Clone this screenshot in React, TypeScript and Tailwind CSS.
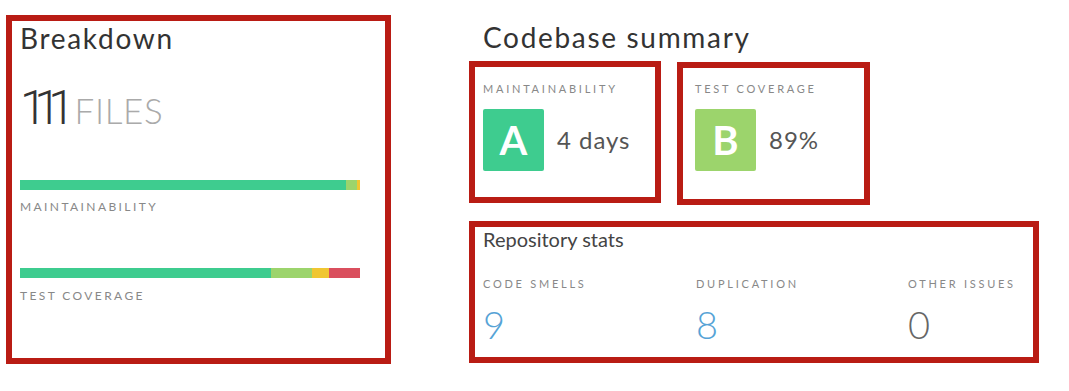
const font = { fontFamily: 'Lato, "Open Sans", sans-serif' };

function Bar({ parts }: { parts: { w: number; c: string }[] }) {
  return (
    <div className="flex h-[10px] w-[340px]">
      {parts.map((p, i) => (
        <div key={i} className={p.c} style={{ width: p.w }} />
      ))}
    </div>
  );
}

function Label({ children, className = '' }: { children: React.ReactNode; className?: string }) {
  return (
    <div className={`text-[11px] leading-[13px] tracking-[0.25em] text-[#888] uppercase ${className}`}>
      {children}
    </div>
  );
}

function Grade({ letter, color, value }: { letter: string; color: string; value: string }) {
  return (
    <div className="mt-[14px] flex items-center">
      <div className={`flex h-[62px] w-[61px] items-center justify-center rounded-[2px] ${color}`}>
        <span className="text-[40px] font-bold leading-none text-white">{letter}</span>
      </div>
      <span className="ml-[13px] text-[24px] tracking-[0.04em] text-[#555]">{value}</span>
    </div>
  );
}

export default function App() {
  return (
    <div className="flex h-[391px] w-[1069px] bg-white" style={font}>
      {/* Breakdown */}
      <div className="ml-[6px] mt-[15px] h-[349px] w-[385px] border-[6px] border-[#b91c14] pl-[8px]">
        <h2 className="text-[28px] leading-[34px] tracking-[0.06em] text-[#333]">Breakdown</h2>
        <div className="mt-[29px] flex h-[48px] items-baseline">
          <span className="font-['Roboto',sans-serif] text-[48px] leading-[48px] font-light tracking-[-0.26em] text-[#333]">
            111
          </span>
          <span className="ml-[12px] text-[35px] leading-[48px] font-light tracking-[0.02em] text-[#aaa]">FILES</span>
        </div>
        <div className="mt-[48px]">
          <Bar
            parts={[
              { w: 326, c: 'bg-[#3ecc8f]' },
              { w: 11, c: 'bg-[#9cd46c]' },
              { w: 3, c: 'bg-[#f0c632]' },
            ]}
          />
        </div>
        <div className="mt-[10px] text-[12px] leading-[14px] tracking-[0.2em] text-[#888]">MAINTAINABILITY</div>
        <div className="mt-[54px]">
          <Bar
            parts={[
              { w: 251, c: 'bg-[#3ecc8f]' },
              { w: 41, c: 'bg-[#9cd46c]' },
              { w: 17, c: 'bg-[#f0c632]' },
              { w: 31, c: 'bg-[#da4f5e]' },
            ]}
          />
        </div>
        <div className="mt-[11px] text-[12px] leading-[14px] tracking-[0.2em] text-[#888]">TEST COVERAGE</div>
      </div>

      {/* Codebase summary */}
      <div className="ml-[78px] flex flex-col">
        <h2 className="mt-[20px] pl-[14px] text-[28px] leading-[34px] tracking-[0.06em] text-[#333]">
          Codebase summary
        </h2>
        <div className="mt-[7px] flex items-start">
          <div className="h-[142px] w-[192px] border-[6px] border-[#b91c14] pl-[8px] pt-[15px]">
            <Label>Maintainability</Label>
            <Grade letter="A" color="bg-[#3ecc8f]" value="4 days" />
          </div>
          <div className="ml-[16px] mt-[1px] h-[143px] w-[193px] border-[6px] border-[#b91c14] pl-[12px] pt-[14px]">
            <Label>Test coverage</Label>
            <Grade letter="B" color="bg-[#9cd46c]" value="89%" />
          </div>
        </div>
        <div className="mt-[16px] h-[142px] w-[570px] border-[6px] border-[#b91c14] pl-[8px]">
          <div className="text-[20px] leading-[24px] text-[#444]">Repository stats</div>
          <div className="mt-[26px] grid grid-cols-[213px_212px_auto]">
            {[
              { label: 'Code smells', value: '9', c: 'text-[#56a3d6]' },
              { label: 'Duplication', value: '8', c: 'text-[#56a3d6]' },
              { label: 'Other issues', value: '0', c: 'text-[#666]' },
            ].map((s) => (
              <div key={s.label}>
                <Label>{s.label}</Label>
                <div className={`mt-[15px] text-[38px] font-light leading-[38px] ${s.c}`}>{s.value}</div>
              </div>
            ))}
          </div>
        </div>
      </div>
    </div>
  );
}
